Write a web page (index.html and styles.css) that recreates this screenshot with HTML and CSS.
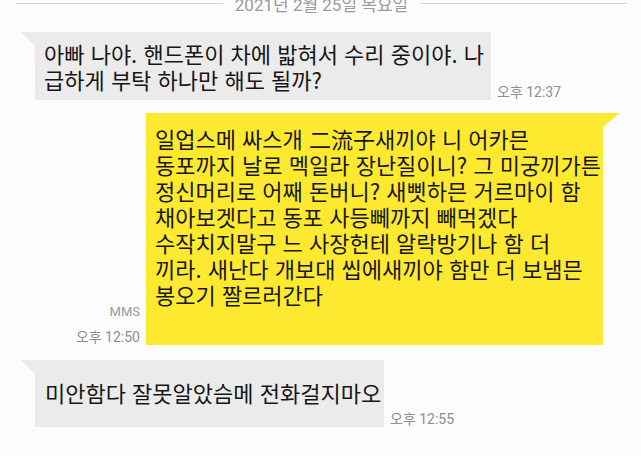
FILE: index.html
```html
<!DOCTYPE html>
<html lang="ko">
<head>
  <meta charset="UTF-8" />
  <meta name="viewport" content="width=device-width, initial-scale=1" />
  <title>메시지</title>
  <link rel="stylesheet" href="styles.css">
</head>
<body>

<div class="chat">
  <div class="date-divider"><span>2021년 2월 25일 목요일</span></div>

  <div class="row in first">
    <div class="bubble gray b1">아빠 나야. 핸드폰이 차에 밟혀서 수리 중이야. 나<br>급하게 부탁 하나만 해도 될까?</div>
    <div class="meta"><span class="time">오후 12:37</span></div>
  </div>

  <div class="row out">
    <div class="meta">
      <span class="kind">MMS</span>
      <span class="time">오후 12:50</span>
    </div>
    <div class="bubble yellow b2">일업스메 싸스개 二流子새끼야 니 어카믄<br>동포까지 날로 멕일라 장난질이니? 그 미궁끼가튼<br>정신머리로 어째 돈버니? 새삣하믄 거르마이 함<br>채아보겟다고 동포 사등뻬까지 빼먹겠다<br>수작치지말구 느 사장헌테 알락방기나 함 더<br>끼라. 새난다 개보대 씹에새끼야 함만 더 보냄믄<br>봉오기 짤르러간다</div>
  </div>

  <div class="row in last">
    <div class="bubble gray b3">미안함다 잘못알았슴메 전화걸지마오</div>
    <div class="meta"><span class="time">오후 12:55</span></div>
  </div>
</div>

</body>
</html>
```

FILE: styles.css
```css
body {
  margin: 0;
  background: #fcfcfc;
  font-family: "Noto Sans CJK KR", "Noto Sans", sans-serif;
  color: #161616;
}

.chat {
  display: flex;
  flex-direction: column;
  overflow: hidden;
  height: 456px;
}

.date-divider {
  display: flex;
  align-items: center;
  gap: 12px;
  height: 20px;
  margin-top: -7px;
  padding: 0 14px 0 16px;
  font-family: Roboto, "Noto Sans CJK KR", sans-serif;
  font-size: 17px;
  color: #9a9a9a;
}

.date-divider::before,
.date-divider::after {
  content: "";
  flex: 1;
  height: 1px;
  background: #d6d6d6;
}

.row {
  display: flex;
  align-items: flex-end;
  gap: 6px;
}

.row.in {
  padding-left: 35px;
}

.row.out {
  justify-content: flex-end;
  padding-right: 38px;
  margin-top: 13px;
}

.row.first {
  margin-top: 19px;
}

.row.last {
  margin-top: 15px;
}

.bubble {
  position: relative;
  font-size: 22px;
  line-height: 26px;
  white-space: nowrap;
}

.bubble.gray {
  background: #ebebeb;
}

.bubble.gray::before {
  content: "";
  position: absolute;
  left: -14px;
  top: 0;
  border-top: 14px solid #ebebeb;
  border-left: 14px solid transparent;
}

.bubble.yellow {
  background: #fde92f;
}

.bubble.yellow::after {
  content: "";
  position: absolute;
  right: -17px;
  top: 0;
  border-top: 14px solid #fde92f;
  border-right: 17px solid transparent;
}

.b1 {
  width: 447px;
  padding: 8px 0 8px 9px;
}

.b2 {
  width: 448px;
  padding: 12px 0 38px 9px;
}

.b3 {
  width: 339px;
  padding: 19px 0 22px 10px;
}

.meta {
  display: flex;
  flex-direction: column;
  align-items: flex-end;
  gap: 9px;
  font-family: Roboto, "Noto Sans CJK KR", sans-serif;
  color: #8e8e8e;
  line-height: 16px;
}

.time {
  font-size: 14px;
}

.kind {
  font-size: 13px;
  color: #9a9a9a;
}
```
